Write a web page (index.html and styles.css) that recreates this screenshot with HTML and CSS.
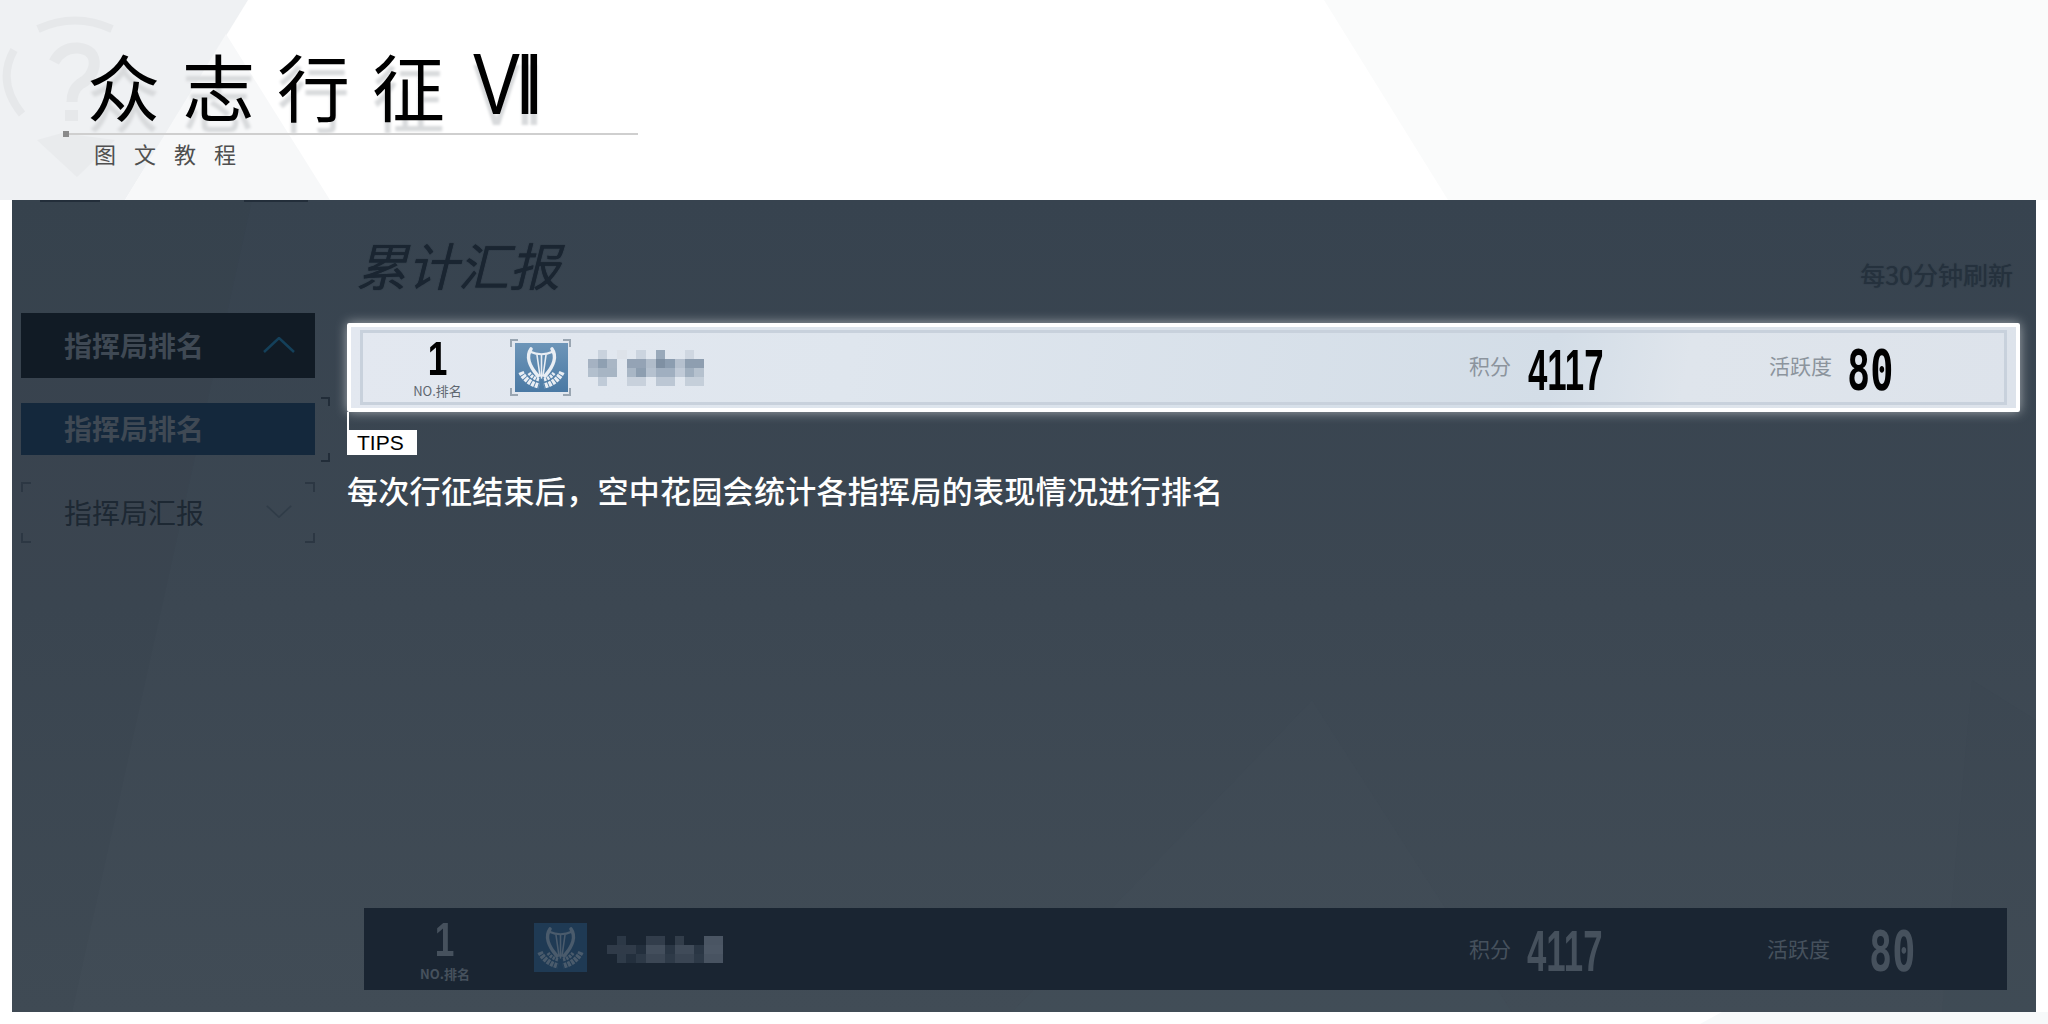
FILE: index.html
```html
<!DOCTYPE html>
<html lang="zh-CN">
<head>
<meta charset="UTF-8">
<title>众志行征 VII 图文教程</title>
<link rel="stylesheet" href="styles.css">
</head>
<body>

<!-- BACKGROUND SHAPES -->
<svg class="page-bg" viewBox="0 0 2048 1024" aria-hidden="true">
<polygon points="0,0 248,0 125,200 0,200" fill="#eff1f3"/>
<polygon points="226,34 330,200 125,200" fill="#f7f8f9"/>
<polygon points="1324,0 2048,0 2048,200 1448,200" fill="#fafbfb"/>
<polygon points="1700,1024 1722,1012 2048,1012 2048,1024" fill="#f7f9fa"/>
<g fill="none" stroke="#e6e8ea" stroke-width="8">
<path d="M38 29 Q75 12 112 29"/>
<path d="M14 50 Q-4 82 22 114"/>
<path d="M54 62 Q62 47 78 48 Q96 50 94 66 Q92 78 80 84 Q72 90 72 102" stroke-width="11"/>
</g>
<rect x="65" y="110" width="13" height="11" fill="#e6e8ea"/>
<polygon points="37,140 62,133 115,140 77,177" fill="#e9ebed"/>
<!-- CREST -->
<symbol id="crest" viewBox="0 0 53 49">
<g fill="none" stroke="currentColor" stroke-linecap="round">
<path d="M16 6C11 13 14 23 23 33M37 6C42 13 39 23 30 33" stroke-width="3.6"/>
<path d="M16 9C22 12 31 12 37 9" stroke-width="2"/>
<path d="M22 12L25 33M26.5 12V35M31 12L28 33" stroke-width="1.6"/>
<path d="M6 29C9 36 16 41 24 43M47 29C44 36 37 41 29 43" stroke-width="5.5" stroke-dasharray="3 .9" stroke-linecap="butt"/>
<path d="M14 30C16 33 20 36 25 37M39 30C37 33 33 36 28 37" stroke-width="3.5" stroke-dasharray="2.4 .9" stroke-linecap="butt"/>
</g>
</symbol>
</svg>

<!-- TITLE -->
<header class="head">
<h1 class="title"><span class="title-text">众志行征</span> <span class="title-no">V<span class="title-bars">II</span></span></h1>
<div class="rule"></div>
<p class="subtitle">图文教程</p>
</header>

<!-- GAME SCREEN -->
<main class="panel">
<svg class="panel-bg" viewBox="0 0 2024 812" preserveAspectRatio="none" aria-hidden="true">
<polygon points="0,0 240,0 60,812 0,812" fill="#2e3b48" opacity=".1"/>
<polygon points="1000,812 1300,500 1500,812" fill="#4a5560" opacity=".08"/>
<polygon points="1960,480 2024,520 2024,812 1930,812" fill="#2e3b48" opacity=".08"/>
<rect x="28" y="0" width="60" height="2" fill="#232e3a"/>
<rect x="232" y="0" width="64" height="2" fill="#232e3a"/>
</svg>

<aside class="side">
<div class="side-item side-item-open">
<span>指挥局排名</span>
<svg class="chev" viewBox="0 0 32 16"><path d="M1 15L16 1L31 15"/></svg>
</div>
<div class="side-item side-item-sub"><span>指挥局排名</span></div>
<div class="side-item side-item-off">
<span>指挥局汇报</span>
<svg class="chev" viewBox="0 0 32 16"><path d="M1 1L16 15L31 1"/></svg>
</div>
</aside>

<section class="main">
<div class="main-head">
<h2 class="main-title">累计汇报</h2>
<span class="main-note">每30分钟刷新</span>
</div>

<!-- RANK ROW, HIGHLIGHTED -->
<div class="row-hi">
<div class="rank-row">
<div class="rank"><b class="rank-no">1</b><small>NO.排名</small></div>
<div class="crest-box">
<svg class="crest"><use href="#crest"/></svg>
</div>
<svg class="mosaic" viewBox="0 0 12 4" preserveAspectRatio="none" shape-rendering="crispEdges" aria-hidden="true">
<rect x="1" y="0" width="1" height="1" fill="#c9d2dd"/>
<rect x="3" y="0" width="1" height="1" fill="#dde2e9"/>
<rect x="5" y="0" width="1" height="1" fill="#cbd4df"/>
<rect x="7" y="0" width="1" height="1" fill="#99a9ba"/>
<rect x="10" y="0" width="1" height="1" fill="#cfd7e1"/>
<rect x="0" y="1" width="1" height="1" fill="#a5b2c2"/>
<rect x="1" y="1" width="1" height="1" fill="#8fa0b2"/>
<rect x="2" y="1" width="1" height="1" fill="#a9b6c5"/>
<rect x="4" y="1" width="2" height="1" fill="#94a3b5"/>
<rect x="6" y="1" width="1" height="1" fill="#b0bcca"/>
<rect x="7" y="1" width="1" height="1" fill="#7f90a3"/>
<rect x="8" y="1" width="1" height="1" fill="#8c9db0"/>
<rect x="9" y="1" width="1" height="1" fill="#b5c0ce"/>
<rect x="10" y="1" width="2" height="1" fill="#8e9eb0"/>
<rect x="0" y="2" width="1" height="1" fill="#b2bfcd"/>
<rect x="1" y="2" width="2" height="1" fill="#a7b5c4"/>
<rect x="4" y="2" width="1" height="1" fill="#a8b6c5"/>
<rect x="5" y="2" width="1" height="1" fill="#8d9eb0"/>
<rect x="6" y="2" width="1" height="1" fill="#b5c1cf"/>
<rect x="7" y="2" width="2" height="1" fill="#a0afc0"/>
<rect x="9" y="2" width="1" height="1" fill="#c0cad7"/>
<rect x="10" y="2" width="1" height="1" fill="#a0afbf"/>
<rect x="11" y="2" width="1" height="1" fill="#b5c1ce"/>
<rect x="1" y="3" width="1" height="1" fill="#c0cbd8"/>
<rect x="4" y="3" width="2" height="1" fill="#c8d1dc"/>
<rect x="7" y="3" width="2" height="1" fill="#bcc7d4"/>
<rect x="10" y="3" width="2" height="1" fill="#c5cfda"/>
</svg>
<div class="stat stat-score">
<span class="stat-label">积分</span><span class="stat-no">4117</span>
</div>
<div class="stat stat-act">
<span class="stat-label">活跃度</span><span class="stat-no stat-no-mono">80</span>
</div>
</div>
</div>

<div class="tips-stem"></div>
<div class="tips">TIPS</div>
<p class="desc">每次行征结束后，空中花园会统计各指挥局的表现情况进行排名</p>

<!-- RANK ROW, OWN -->
<div class="rank-row rank-row-own">
<div class="rank"><b class="rank-no">1</b><small>NO.排名</small></div>
<div class="crest-box">
<svg class="crest"><use href="#crest"/></svg>
</div>
<svg class="mosaic" viewBox="0 0 12 3" preserveAspectRatio="none" shape-rendering="crispEdges" aria-hidden="true">
<rect x="1" y="0" width="1" height="1" fill="#2c3846"/>
<rect x="4" y="0" width="2" height="1" fill="#323d4b"/>
<rect x="7" y="0" width="1" height="1" fill="#323d4a"/>
<rect x="10" y="0" width="2" height="1" fill="#4a5563"/>
<rect x="0" y="1" width="3" height="1" fill="#303b49"/>
<rect x="3" y="1" width="1" height="1" fill="#232f3d"/>
<rect x="4" y="1" width="2" height="1" fill="#434e5c"/>
<rect x="6" y="1" width="1" height="1" fill="#2a3644"/>
<rect x="7" y="1" width="2" height="1" fill="#404b59"/>
<rect x="9" y="1" width="1" height="1" fill="#2a3644"/>
<rect x="10" y="1" width="2" height="1" fill="#4c5765"/>
<rect x="1" y="2" width="1" height="1" fill="#2f3b49"/>
<rect x="2" y="2" width="1" height="1" fill="#232f3d"/>
<rect x="3" y="2" width="1" height="1" fill="#2d3947"/>
<rect x="4" y="2" width="2" height="1" fill="#3c4755"/>
<rect x="6" y="2" width="1" height="1" fill="#2e3a48"/>
<rect x="7" y="2" width="2" height="1" fill="#3a4553"/>
<rect x="9" y="2" width="1" height="1" fill="#2d3947"/>
<rect x="10" y="2" width="2" height="1" fill="#485361"/>
</svg>
<div class="stat stat-score">
<span class="stat-label">积分</span><span class="stat-no">4117</span>
</div>
<div class="stat stat-act">
<span class="stat-label">活跃度</span><span class="stat-no stat-no-mono">80</span>
</div>
</div>
</section>
</main>

</body>
</html>
```
FILE: styles.css
```css
*{box-sizing:border-box;}

body{
margin:0;
width:2048px;
height:1024px;
overflow:hidden;
position:relative;
background:#fff;
font-family:"Noto Sans CJK SC","Liberation Sans",sans-serif;
}

svg{display:block;}

.page-bg{
position:absolute;
left:0;
top:0;
width:2048px;
height:1024px;
}

/* TITLE */
.head{
position:relative;
height:200px;
padding-top:39px;
}
.title{
display:flex;
margin:0 0 0 87px;
height:92px;
font-size:73px;
line-height:90px;
font-weight:400;
color:#000;
text-shadow:0 11px 3px #d8dadc;
white-space:nowrap;
}
.title-text{
width:386px;
letter-spacing:22px;
}
.title-no{
display:block;
font-family:"Liberation Sans",sans-serif;
font-size:88px;
letter-spacing:-6px;
transform:scaleX(.8);
transform-origin:left center;
}
.title-bars{
letter-spacing:-13.5px;
}
.rule{
position:relative;
margin-left:65px;
width:573px;
height:2px;
margin-top:2px;
background:#cfcfcf;
}
.rule::before{
content:"";
position:absolute;
left:-2px;
top:-2px;
width:6px;
height:6px;
background:#8a8a8a;
}
.subtitle{
margin:5px 0 0 94px;
font-size:22px;
line-height:26px;
letter-spacing:18px;
color:#4f4f4f;
}

/* PANEL */
.panel{
position:relative;
display:flex;
gap:32px;
width:2024px;
height:812px;
margin-left:12px;
padding:0 16px 22px 9px;
overflow:hidden;
background:linear-gradient(180deg,#37434f 0%,#3c4752 50%,#414c56 100%);
}
.panel-bg{
position:absolute;
left:0;
top:0;
width:100%;
height:100%;
}

/* SIDE MENU */
.side{
position:relative;
flex:0 0 294px;
padding-top:113px;
}
.side-item{
position:relative;
display:flex;
align-items:center;
justify-content:space-between;
padding:0 20px 2px 43px;
font-size:28px;
font-weight:700;
color:#3f4954;
}
.side-item-open{
height:65px;
background:#111b25;
}
.side-item-sub{
height:52px;
margin-top:25px;
background:#14283c;
}
.side-item-off{
height:61px;
margin-top:27px;
font-weight:400;
color:#1d2833;
background:
linear-gradient(#2c3743,#2c3743) 0 0/10px 2px no-repeat,
linear-gradient(#2c3743,#2c3743) 0 0/2px 10px no-repeat,
linear-gradient(#2c3743,#2c3743) 100% 0/10px 2px no-repeat,
linear-gradient(#2c3743,#2c3743) 100% 0/2px 10px no-repeat,
linear-gradient(#2c3743,#2c3743) 0 100%/10px 2px no-repeat,
linear-gradient(#2c3743,#2c3743) 0 100%/2px 10px no-repeat,
linear-gradient(#2c3743,#2c3743) 100% 100%/10px 2px no-repeat,
linear-gradient(#2c3743,#2c3743) 100% 100%/2px 10px no-repeat;
}
.side-item-sub::after{
content:"";
position:absolute;
right:-15px;
top:-6px;
bottom:-7px;
width:9px;
background:
linear-gradient(#222d39,#222d39) 0 0/9px 2px no-repeat,
linear-gradient(#222d39,#222d39) 100% 0/2px 9px no-repeat,
linear-gradient(#222d39,#222d39) 0 100%/9px 2px no-repeat,
linear-gradient(#222d39,#222d39) 100% 100%/2px 9px no-repeat;
}
.chev{
width:32px;
height:16px;
fill:none;
stroke:#14405a;
stroke-width:2.5;
}
.side-item-off .chev{
height:13px;
stroke:#303c48;
stroke-width:2;
}

/* MAIN */
.main{
position:relative;
flex:1;
display:flex;
flex-direction:column;
}
.main-head{
display:flex;
justify-content:space-between;
height:123px;
padding:32px 7px 0 9px;
}
.main-title{
margin:0;
font-size:51px;
line-height:64px;
font-weight:400;
font-style:italic;
color:#1a2531;
text-shadow:0 0 1px #1a2531;
}
.main-note{
margin-top:24px;
font-size:25px;
line-height:36px;
color:#25313d;
text-shadow:0 0 1px #25313d;
}

/* RANK ROWS */
.row-hi{
height:89px;
padding:3px 9px;
border:4px solid #fff;
border-radius:2px;
background:linear-gradient(100deg,#e3e8f0 0%,#dfe6ee 30%,#d3dde7 72%,#dfe5ec 80%,#dde3eb 100%);
box-shadow:0 0 12px rgba(255,255,255,.55);
}
.row-hi .rank-row{
height:75px;
border:3px solid #c8d1dc;
}
.rank-row{
display:flex;
align-items:center;
}
.rank{
flex:0 0 149px;
display:flex;
flex-direction:column;
align-items:center;
}
.rank-no{
display:block;
font-family:"Liberation Sans",sans-serif;
font-size:49px;
line-height:40px;
color:#000;
transform:scaleX(.72);
}
.rank small{
font-size:13px;
line-height:14px;
margin-top:6px;
color:#5f6770;
}
.crest-box{
position:relative;
flex:0 0 auto;
width:53px;
height:49px;
margin-left:3px;
color:#e9eef4;
background:linear-gradient(180deg,#6d95b8,#4a79a4);
}
.crest-box::after{
content:"";
position:absolute;
left:-5px;
right:-3px;
top:-4px;
bottom:-4px;
background:
linear-gradient(#9aa6b2,#9aa6b2) 0 0/8px 2px no-repeat,
linear-gradient(#9aa6b2,#9aa6b2) 0 0/2px 8px no-repeat,
linear-gradient(#9aa6b2,#9aa6b2) 100% 0/8px 2px no-repeat,
linear-gradient(#9aa6b2,#9aa6b2) 100% 0/2px 8px no-repeat,
linear-gradient(#9aa6b2,#9aa6b2) 0 100%/8px 2px no-repeat,
linear-gradient(#9aa6b2,#9aa6b2) 0 100%/2px 8px no-repeat,
linear-gradient(#9aa6b2,#9aa6b2) 100% 100%/8px 2px no-repeat,
linear-gradient(#9aa6b2,#9aa6b2) 100% 100%/2px 8px no-repeat;
}
.crest{
width:53px;
height:49px;
}
.mosaic{
flex:0 0 116px;
width:116px;
height:36px;
margin-left:20px;
filter:blur(.7px);
}
.stat{
display:flex;
align-items:center;
}
.stat-score{
margin-left:auto;
width:300px;
gap:17px;
}
.stat-act{
width:235px;
gap:15px;
}
.stat-label{
font-size:21px;
line-height:30px;
padding-bottom:5px;
color:#8c949d;
}
.stat-no{
display:block;
width:76px;
margin-top:4px;
font-family:"Liberation Sans",sans-serif;
font-size:58px;
line-height:46px;
font-weight:700;
color:#000;
transform:scaleX(.6);
transform-origin:left center;
white-space:nowrap;
}
.stat-no-mono{
width:46px;
font-family:"DejaVu Sans Mono",monospace;
font-size:55px;
transform:scaleX(.7);
}

/* TIPS */
.tips-stem{
width:2px;
height:18px;
background:#fff;
}
.tips{
width:70px;
height:25px;
padding-left:10px;
font-family:"Liberation Sans",sans-serif;
font-size:21px;
line-height:25px;
color:#000;
background:#fff;
}
.desc{
margin:16px 0 0;
font-size:31px;
line-height:38px;
letter-spacing:.3px;
font-weight:500;
color:#fff;
white-space:nowrap;
}

/* OWN ROW */
.rank-row-own{
height:82px;
margin:auto 13px 0 17px;
background:#1a2532;
}
.rank-row-own .rank{
flex-basis:162px;
}
.rank-row-own .rank-no,
.rank-row-own .stat-no{
color:#46515d;
}
.rank-row-own .rank-no{
margin-top:2px;
}
.rank-row-own .rank small{
margin-top:8px;
color:#46515d;
font-weight:700;
}
.rank-row-own .crest-box{
margin:-3px 0 0 8px;
color:#4a5b6c;
background:#1f3a54;
}
.rank-row-own .crest-box::after{
display:none;
}
.rank-row-own .mosaic{
height:27px;
}
.rank-row-own .stat-label{
padding-bottom:3px;
color:#46515d;
}
.rank-row-own .stat-score{
width:298px;
gap:16px;
}
.rank-row-own .stat-act{
width:240px;
gap:39px;
}
```
